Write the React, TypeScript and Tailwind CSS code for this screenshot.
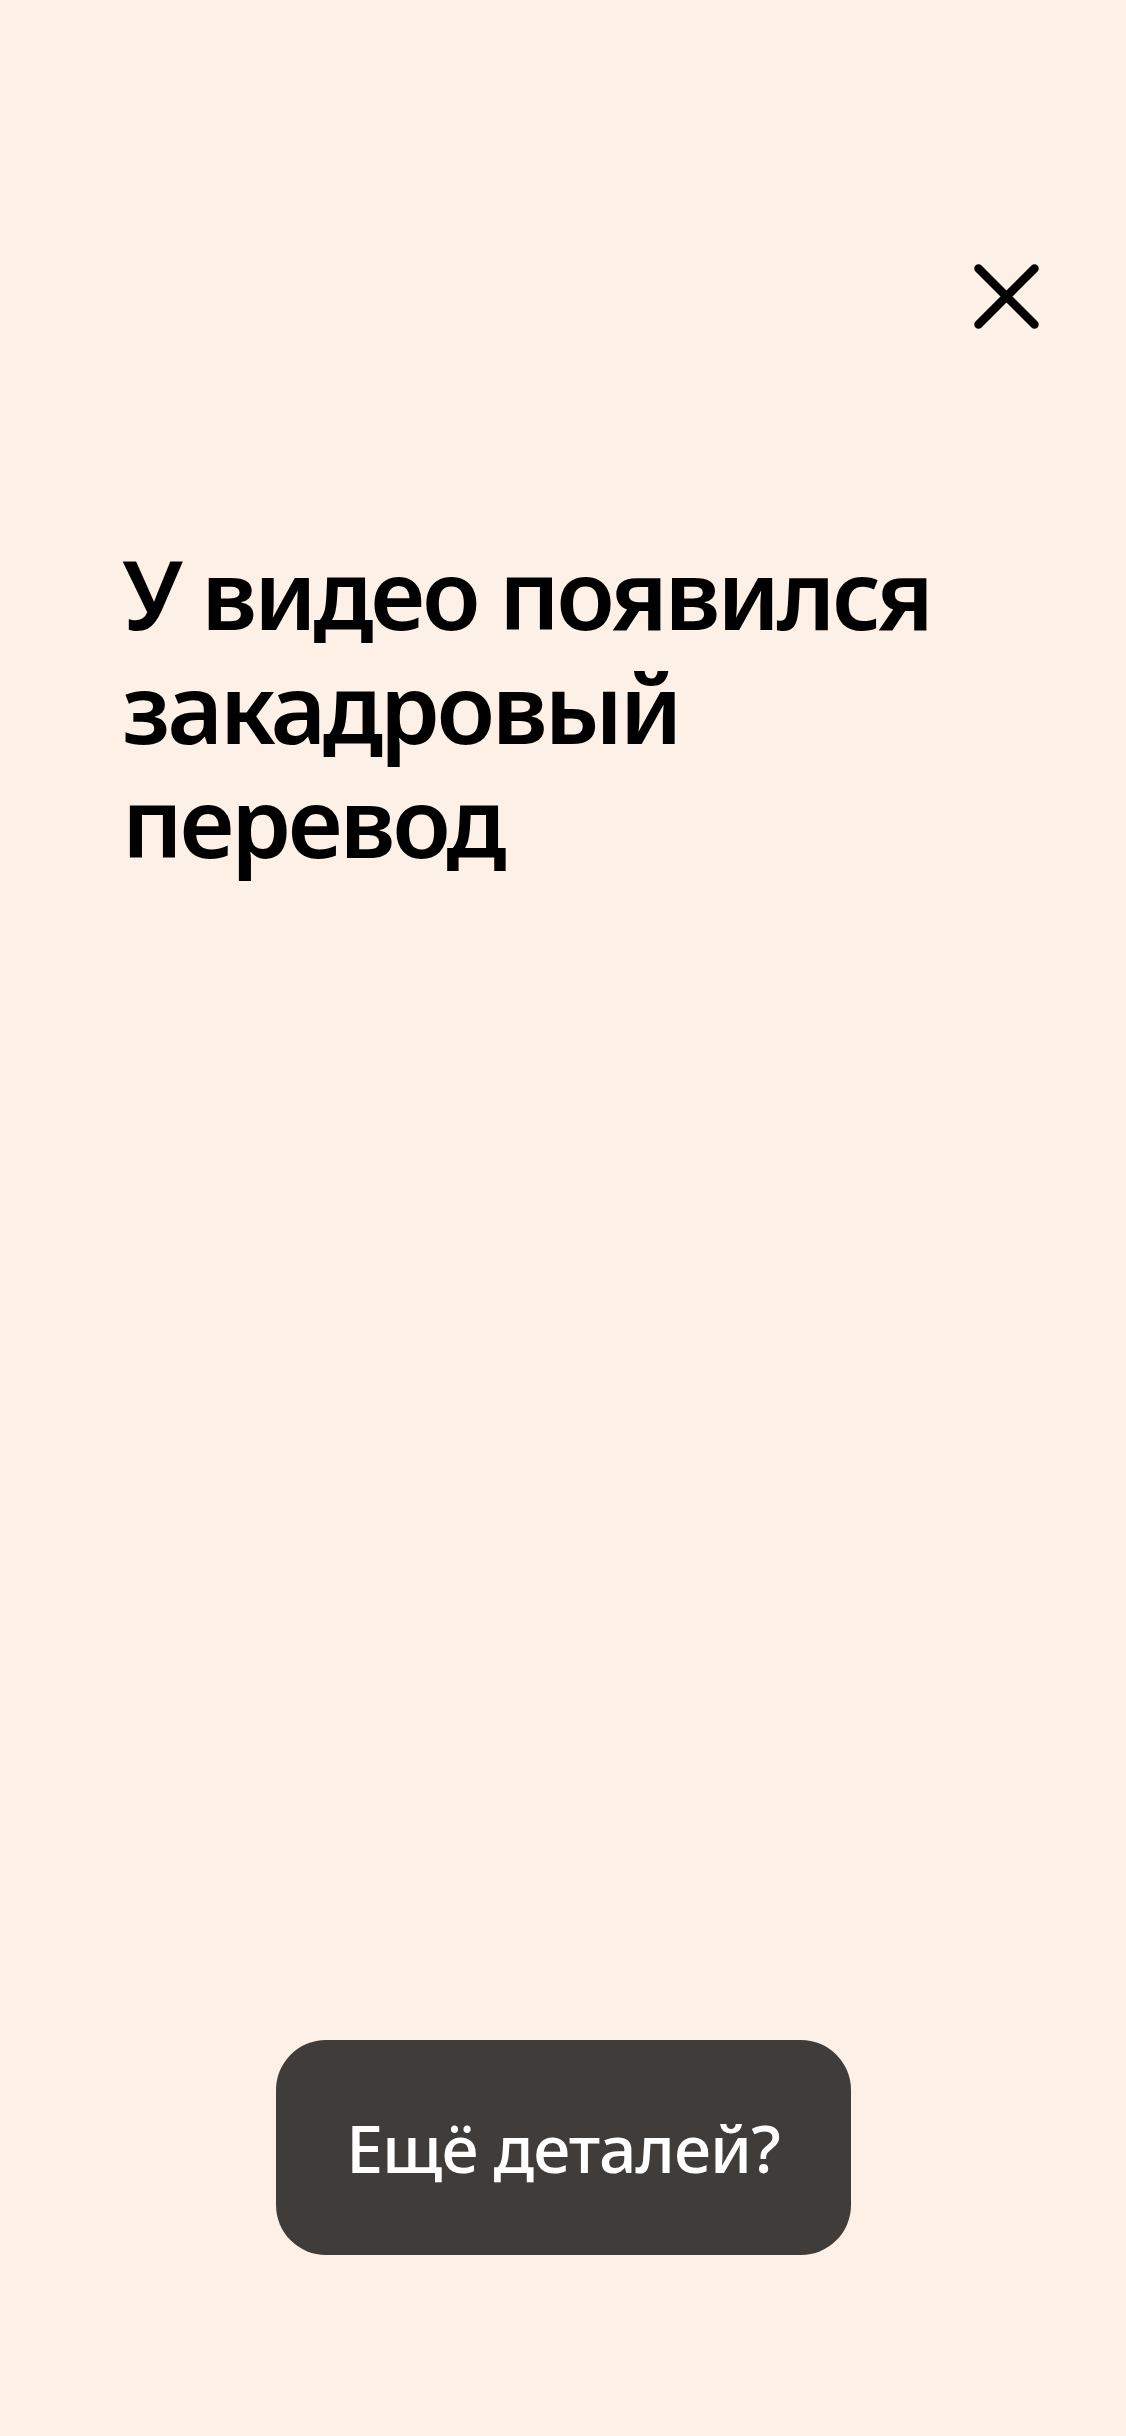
export default function App() {
  return (
    <div
      className="flex h-[2436px] w-full flex-col bg-[#fdf0e6] text-black"
      style={{ fontFamily: '"Noto Sans", "Open Sans", sans-serif' }}
    >
      {/* Close */}
      <div className="flex justify-end pt-[264px] pr-[87px]">
        <button aria-label="Закрыть" className="h-[65px] w-[65px]">
          <svg viewBox="0 0 65 65" className="h-[65px] w-[65px]" aria-hidden="true">
            <path
              d="M4.5 4.5L60.5 60.5M60.5 4.5L4.5 60.5"
              stroke="#000"
              strokeWidth={8.5}
              strokeLinecap="round"
              fill="none"
            />
          </svg>
        </button>
      </div>

      {/* Title */}
      <h1 className="mt-[207px] pl-[122px] pr-[60px] text-[96px] leading-[114px] font-semibold tracking-[-3.3px]">
        У видео появился
        <br />
        закадровый
        <br />
        перевод
      </h1>

      {/* Action */}
      <div className="mt-auto mb-[181px] flex justify-center">
        <button className="flex h-[215px] w-[575px] items-center justify-center rounded-[50px] bg-[#403c39] text-[66px] font-medium text-white tracking-[-1px]">
          Ещё деталей?
        </button>
      </div>
    </div>
  );
}
